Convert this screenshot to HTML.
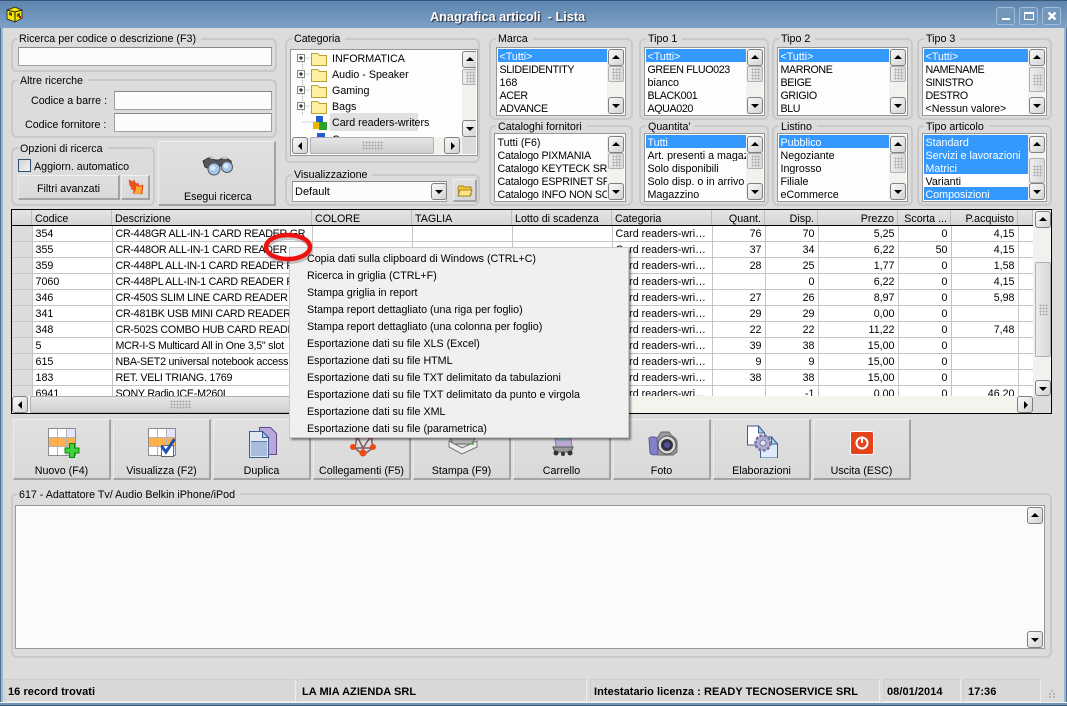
<!DOCTYPE html>
<html><head><meta charset="utf-8"><style>
html,body{margin:0;padding:0}
body{width:1067px;height:706px;overflow:hidden;position:relative;background:#dcdcdc;font:10.7px/13px "Liberation Sans",sans-serif;color:#000}
div,span,svg{position:absolute;box-sizing:border-box}
.g{border:2px solid #c9c9c9;border-radius:6px}
.l{background:#dcdcdc;padding:0 5px 0 2px;white-space:nowrap;height:13px}
.t{white-space:nowrap}
.in{background:#fcfcfc;border:1px solid #a0a0a0;border-top-color:#888}
.btn{background:linear-gradient(#e0e0e0,#d9d9d9);border:1px solid #f0f0f0;border-right:2px solid #a3a3a3;border-bottom:2px solid #a3a3a3;border-left-color:#ededed;text-align:center}
.lb{background:#fdfdfd;border:2px solid #fff;outline:1px solid #969696;outline-offset:-1px;overflow:hidden}
.i{position:absolute;left:0;right:17px;height:13px;line-height:17px;padding-left:1.5px;white-space:nowrap;overflow:hidden}
.u{letter-spacing:-.38px}
.s{background:#3399ff;color:#fff}
.tr{background:#f1f1ee;right:0;top:0;bottom:0;width:17px}
.sb{background:linear-gradient(135deg,#fafafa,#d2d2d4);border:1px solid #808080;border-radius:3px;width:16px;height:17px;left:0}
.up:after,.dn:after,.lf:after,.rt:after{content:"";position:absolute;width:0;height:0}
.up:after{left:3px;top:5px;border:4px solid transparent;border-top:0;border-bottom:4px solid #000}
.dn:after{left:3px;top:6px;border:4px solid transparent;border-bottom:0;border-top:4px solid #000}
.lf:after{left:5px;top:4px;border:4px solid transparent;border-left:0;border-right:4px solid #000}
.rt:after{left:6px;top:4px;border:4px solid transparent;border-right:0;border-left:4px solid #000}
.th{background:linear-gradient(90deg,#ececee,#d8d8da);border:1px solid #b0b0b2;border-radius:2px}
.th:after{content:"";position:absolute;left:50%;top:50%;width:9px;height:12px;margin:-6px 0 0 -4.5px;background-image:radial-gradient(#a8a8a8 .8px,transparent 1px);background-size:3px 3px}
.h:after{width:21px;height:9px;margin:-4.5px 0 0 -10.5px}
.hd{top:0;height:15px;background:linear-gradient(#e4e4e4,#d6d6d6);border-right:1px solid #bdbdbd;padding:3px 3px 0;white-space:nowrap;overflow:hidden}
.r{text-align:right}
table{position:absolute;left:0;top:0;border-collapse:collapse;table-layout:fixed;width:1021px;background:#fff}
td{height:14px;padding:1px 3px 0;border-right:1px solid #c4c4c4;border-bottom:1px solid #c4c4c4;white-space:nowrap;overflow:hidden;line-height:14px;vertical-align:middle}
td.n{text-align:right}
td.f{background:#dcdcdc;padding:0}
td.d{letter-spacing:-.25px}
.m{left:17px;white-space:nowrap;height:17px;line-height:17px;top:0}
.bl{left:0;right:0;top:45px;text-align:center;line-height:13px}
.st{top:679px;height:23px;background:#d8d8d8;border:1px solid #cfcfcf;border-right-color:#ececec;border-bottom-color:#ececec;font-size:11px;font-weight:bold;line-height:25px;padding-left:3px;white-space:nowrap;letter-spacing:.05px}
</style></head><body>

<!-- window frame -->
<div style="left:0;top:0;width:1067px;height:28px;background:linear-gradient(#5d85ae,#7da1c6);border-top:1px solid #33577a"></div>
<div style="left:0;top:28px;width:3px;height:678px;background:#9db7d2;border-left:1px solid #4a6d90"></div>
<div style="right:0;top:28px;width:3px;height:678px;background:#9db7d2;border-right:1px solid #4a6d90"></div>
<div style="left:0;top:702px;width:1067px;height:4px;background:#6f94ba;border-top:1px solid #f2f2f2;border-bottom:1px solid #3d5d7d"></div>
<svg style="left:6px;top:6px" width="17" height="17" viewBox="0 0 17 17"><path d="M1 4l8-3 7 3v8l-7 4-8-3z" fill="#f5e400" stroke="#333"/><path d="M9 6v10M1 4l8 2 7-2" stroke="#222" fill="none"/><path d="M3 6l3 1v3l-3-1zM11 8l3-1v3l-3 1z" fill="#443"/><rect x="13" y="10" width="2" height="2" fill="#c00"/></svg>
<div class="t" style="left:430px;top:11px;color:#fff;font-weight:bold;font-size:12.7px;text-shadow:1px 1px 1px #223;white-space:pre">Anagrafica articoli  - Lista</div>
<div style="left:996px;top:7px;width:19px;height:18px;border:1px solid #a5bdd6;border-radius:3px;background:#7297bd"><div style="left:5px;top:10px;width:8px;height:2px;background:#fff"></div></div>
<div style="left:1019px;top:7px;width:19px;height:18px;border:1px solid #a5bdd6;border-radius:3px;background:#7297bd"><div style="left:4px;top:4px;width:10px;height:8px;border:1px solid #fff;border-top-width:2px"></div></div>
<div style="left:1042px;top:7px;width:19px;height:18px;border:1px solid #a5bdd6;border-radius:3px;background:#7297bd"><svg style="left:4px;top:3px" width="10" height="10"><path d="M1.500 1.500l7 7M8.500 1.500l-7 7" stroke="#fff" stroke-width="2.400"/></svg></div>

<!-- Ricerca -->
<div class="g" style="left:11px;top:38px;width:266px;height:34px"></div>
<div class="l" style="left:17px;top:32px;line-height:15px">Ricerca per codice o descrizione (F3)</div>
<div class="in" style="left:18px;top:47px;width:254px;height:19px"></div>
<!-- Altre -->
<div class="g" style="left:11px;top:79px;width:266px;height:59px"></div>
<div class="l" style="left:18px;top:75px">Altre ricerche</div>
<div class="t" style="left:31px;top:95px">Codice a barre :</div>
<div class="in" style="left:114px;top:91px;width:158px;height:19px"></div>
<div class="t" style="left:25px;top:119px">Codice fornitore :</div>
<div class="in" style="left:114px;top:113px;width:158px;height:19px"></div>
<!-- Opzioni -->
<div class="g" style="left:11px;top:147px;width:144px;height:59px"></div>
<div class="l" style="left:18px;top:143px">Opzioni di ricerca</div>
<div style="left:18px;top:159px;width:13px;height:13px;border:1px solid #2f4f70;background:linear-gradient(135deg,#d4d4d4,#f2f2f2)"></div>
<div class="t" style="left:34px;top:161px">Aggiorn. automatico</div>
<div class="btn" style="left:18px;top:175px;width:102px;height:25px;line-height:27px">Filtri avanzati</div>
<div class="btn" style="left:121px;top:175px;width:29px;height:25px"><svg style="left:6px;top:3px" width="17" height="17" viewBox="0 0 17 17"><path d="M1 1l4 2 1-2 2 4 2-1 1 3 4-1-1 9-9-1 1-3-3-1 1-2-2-1z" fill="#f0501a" stroke="#e8400f" stroke-width=".6"/><path d="M8 7l3 1 3-1-1 8-7-1 2-3z" fill="#ffaa30"/></svg></div>
<!-- Esegui -->
<div class="btn" style="left:158px;top:141px;width:118px;height:65px">
<svg style="left:41px;top:12px" width="34" height="22" viewBox="0 0 34 22"><path d="M3 7l7-4 5 3h4l6-3 6 4 1 6-8 1-5-3h-3l-4 5-7-3z" fill="#55565c" stroke="#333"/><path d="M8 3l4-1 3 3H12zM20 3l5-1 3 3h-5z" fill="#c8c8cc"/><circle cx="14" cy="15" r="6" fill="#a5c8ee" stroke="#555"/><circle cx="27" cy="13" r="5.500" fill="#a5c8ee" stroke="#555"/><circle cx="13" cy="14" r="2.500" fill="#dcebfa"/><circle cx="26" cy="12" r="2.500" fill="#dcebfa"/></svg>
<div class="t" style="left:25px;top:49px">Esegui ricerca</div></div>

<!-- Categoria -->
<div class="g" style="left:285px;top:38px;width:195px;height:125px"></div>
<div class="l" style="left:292px;top:33px">Categoria</div>
<div class="lb" style="left:290px;top:49px;width:188px;height:107px">
 <svg style="left:0;top:0" width="60" height="90"><path d="M10.500 3v62M10.500 7h8M10.500 23h8M10.500 39h8M10.500 55h8M10.500 71h16" stroke="#aaa" stroke-dasharray="1 1" fill="none"/>
 <g fill="#fff" stroke="#888"><rect x="5.500" y="3.500" width="7" height="7"/><rect x="5.500" y="19.500" width="7" height="7"/><rect x="5.500" y="35.500" width="7" height="7"/><rect x="5.500" y="51.500" width="7" height="7"/></g>
 <path d="M7 7h4M9 5v4M7 23h4M9 21v4M7 39h4M9 37v4M7 55h4M9 53v4" stroke="#000"/>
 <g fill="#fdf0a0" stroke="#b9a030"><path d="M19.500 2.500h6l2 2h7v10h-15z"/><path d="M19.500 18.500h6l2 2h7v10h-15z"/><path d="M19.500 34.500h6l2 2h7v10h-15z"/><path d="M19.500 50.500h6l2 2h7v10h-15z"/></g>
 <rect x="24" y="65" width="7" height="7" fill="#1e5fd0"/><rect x="21" y="71" width="7" height="7" fill="#e8b800"/><rect x="27" y="71" width="8" height="8" fill="#2da52d"/><rect x="25" y="82" width="8" height="8" fill="#1e5fd0"/></svg>
 <div class="t" style="left:40px;top:2px">INFORMATICA</div>
 <div class="t" style="left:40px;top:18px">Audio - Speaker</div>
 <div class="t" style="left:40px;top:34px">Gaming</div>
 <div class="t" style="left:40px;top:50px">Bags</div>
 <div class="t" style="left:38px;top:62px;width:88px;height:18px;background:#e0e0e0;padding:4px 2px 0">Card readers-writers</div>
 <div class="t" style="left:40px;top:83px">Cases</div>
 <div class="tr" style="left:170px;width:16px;height:86px;top:0"><div class="sb up" style="top:0;height:17px"></div><div class="th" style="top:18px;left:0;width:16px;height:16px"></div><div class="sb dn" style="top:69px;height:17px"></div></div>
 <div style="left:0;top:86px;width:170px;height:19px;background:#f1f1ee"><div class="sb lf" style="left:0;top:0;height:17px"></div><div class="th h" style="left:18px;top:0;width:124px;height:17px;background:linear-gradient(#e6e6e8,#cfcfd2)"></div><div class="sb rt" style="left:152px;top:0;height:17px"></div></div>
 <div style="left:170px;top:86px;width:16px;height:19px;background:#dcdcdc"></div>
</div>
<!-- Visualizzazione -->
<div class="g" style="left:285px;top:174px;width:195px;height:32px"></div>
<div class="l" style="left:292px;top:169px">Visualizzazione</div>
<div class="in" style="left:292px;top:181px;width:155px;height:21px;padding:4px 2px;font-size:11px">Default<div class="sb dn" style="left:138px;top:1px;height:17px"></div></div>
<div class="btn" style="left:453px;top:179px;width:24px;height:23px"><svg style="left:3px;top:3px" width="16" height="15" viewBox="0 0 16 15"><path d="M1 5l1-2h4l1 1h7v8l-11 1H2z" fill="#f3c93b" stroke="#a8801a"/><path d="M3 7h12l-2 6H1z" fill="#fde48a" stroke="#a8801a"/></svg></div>

<!-- Marca -->
<div class="g" style="left:489px;top:38px;width:144px;height:82px"></div><div class="l" style="left:496px;top:33px">Marca</div>
<div class="lb" style="left:496px;top:47px;width:130px;height:69px"><div class="tr"></div>
<div class="i s" style="top:0">&lt;Tutti&gt;</div><div class="i u" style="top:13px">SLIDEIDENTITY</div><div class="i" style="top:26px">168</div><div class="i u" style="top:39px">ACER</div><div class="i u" style="top:52px">ADVANCE</div>
<div class="sb up" style="left:110px;top:0"></div><div class="th" style="left:110px;top:17px;width:16px;height:16px"></div><div class="sb dn" style="left:110px;top:48px"></div></div>
<!-- Tipo 1 -->
<div class="g" style="left:639px;top:38px;width:130px;height:82px"></div><div class="l" style="left:646px;top:33px">Tipo 1</div>
<div class="lb" style="left:644px;top:47px;width:121px;height:69px"><div class="tr"></div>
<div class="i s" style="top:0">&lt;Tutti&gt;</div><div class="i u" style="top:13px">GREEN FLUO023</div><div class="i" style="top:26px">bianco</div><div class="i u" style="top:39px">BLACK001</div><div class="i u" style="top:52px">AQUA020</div>
<div class="sb up" style="left:101px;top:0"></div><div class="th" style="left:101px;top:17px;width:16px;height:16px"></div><div class="sb dn" style="left:101px;top:48px"></div></div>
<!-- Tipo 2 -->
<div class="g" style="left:772px;top:38px;width:141px;height:82px"></div><div class="l" style="left:779px;top:33px">Tipo 2</div>
<div class="lb" style="left:777px;top:47px;width:131px;height:69px"><div class="tr"></div>
<div class="i s" style="top:0">&lt;Tutti&gt;</div><div class="i u" style="top:13px">MARRONE</div><div class="i u" style="top:26px">BEIGE</div><div class="i u" style="top:39px">GRIGIO</div><div class="i u" style="top:52px">BLU</div>
<div class="sb up" style="left:111px;top:0"></div><div class="th" style="left:111px;top:17px;width:16px;height:16px"></div><div class="sb dn" style="left:111px;top:48px"></div></div>
<!-- Tipo 3 -->
<div class="g" style="left:917px;top:38px;width:135px;height:82px"></div><div class="l" style="left:924px;top:33px">Tipo 3</div>
<div class="lb" style="left:922px;top:47px;width:125px;height:69px"><div class="tr"></div>
<div class="i s" style="top:0">&lt;Tutti&gt;</div><div class="i u" style="top:13px">NAMENAME</div><div class="i u" style="top:26px">SINISTRO</div><div class="i u" style="top:39px">DESTRO</div><div class="i" style="top:52px">&lt;Nessun valore&gt;</div>
<div class="sb up" style="left:105px;top:0"></div><div class="th" style="left:105px;top:18px;width:16px;height:25px"></div><div class="sb dn" style="left:105px;top:48px"></div></div>

<!-- Cataloghi -->
<div class="g" style="left:489px;top:125px;width:144px;height:81px"></div><div class="l" style="left:496px;top:121px">Cataloghi fornitori</div>
<div class="lb" style="left:494px;top:133px;width:132px;height:69px"><div class="tr"></div>
<div class="i" style="top:0">Tutti (F6)</div><div class="i u" style="top:13px;letter-spacing:-.2px">Catalogo PIXMANIA</div><div class="i u" style="top:26px;letter-spacing:-.2px">Catalogo KEYTECK SRL</div><div class="i u" style="top:39px;letter-spacing:-.2px">Catalogo ESPRINET SPA</div><div class="i u" style="top:52px;letter-spacing:-.2px">Catalogo INFO NON SOLO</div>
<div class="sb up" style="left:112px;top:1px"></div><div class="th" style="left:112px;top:18px;width:16px;height:16px"></div><div class="sb dn" style="left:112px;top:48px"></div></div>
<!-- Quantita -->
<div class="g" style="left:639px;top:125px;width:130px;height:81px"></div><div class="l" style="left:646px;top:121px">Quantita'</div>
<div class="lb" style="left:644px;top:133px;width:121px;height:69px"><div class="tr"></div>
<div class="i s" style="top:0">Tutti</div><div class="i" style="top:13px">Art. presenti a magazzino</div><div class="i" style="top:26px">Solo disponibili</div><div class="i" style="top:39px">Solo disp. o in arrivo</div><div class="i" style="top:52px">Magazzino</div>
<div class="sb up" style="left:101px;top:1px"></div><div class="th" style="left:101px;top:18px;width:16px;height:16px"></div><div class="sb dn" style="left:101px;top:48px"></div></div>
<!-- Listino -->
<div class="g" style="left:772px;top:125px;width:141px;height:81px"></div><div class="l" style="left:779px;top:121px">Listino</div>
<div class="lb" style="left:777px;top:133px;width:131px;height:69px"><div class="tr"></div>
<div class="i s" style="top:0">Pubblico</div><div class="i" style="top:13px">Negoziante</div><div class="i" style="top:26px">Ingrosso</div><div class="i" style="top:39px">Filiale</div><div class="i" style="top:52px">eCommerce</div>
<div class="sb up" style="left:111px;top:1px"></div><div class="th" style="left:111px;top:18px;width:16px;height:20px"></div><div class="sb dn" style="left:111px;top:48px"></div></div>
<!-- Tipo articolo -->
<div class="g" style="left:917px;top:125px;width:135px;height:81px"></div><div class="l" style="left:924px;top:121px">Tipo articolo</div>
<div class="lb" style="left:922px;top:133px;width:125px;height:69px"><div class="tr"></div>
<div class="i s" style="top:0">Standard</div><div class="i s" style="top:13px">Servizi e lavorazioni</div><div class="i s" style="top:26px">Matrici</div><div class="i" style="top:39px">Varianti</div><div class="i s" style="top:52px">Composizioni</div>
<div class="sb up" style="left:105px;top:1px"></div><div class="th" style="left:105px;top:23px;width:16px;height:25px"></div><div class="sb dn" style="left:105px;top:48px"></div></div>

<!-- Grid -->
<div style="left:11px;top:209px;width:1041px;height:205px;background:#dcdcdc;border:1px solid #000;overflow:hidden">
 <div class="hd" style="left:0;width:20px"></div>
 <div class="hd" style="left:20px;width:80px">Codice</div>
 <div class="hd" style="left:100px;width:200px">Descrizione</div>
 <div class="hd" style="left:300px;width:100px">COLORE</div>
 <div class="hd" style="left:400px;width:100px">TAGLIA</div>
 <div class="hd" style="left:500px;width:100px">Lotto di scadenza</div>
 <div class="hd" style="left:600px;width:100px">Categoria</div>
 <div class="hd r" style="left:700px;width:53px">Quant.</div>
 <div class="hd r" style="left:753px;width:53px">Disp.</div>
 <div class="hd r" style="left:806px;width:80px">Prezzo</div>
 <div class="hd r" style="left:886px;width:53px">Scorta ...</div>
 <div class="hd r" style="left:939px;width:67px">P.acquisto</div>
 <div class="hd" style="left:1006px;width:15px"></div>
 <div style="left:0;top:15px;width:1021px;height:1px;background:#000"></div>
 <div style="left:0;top:16px;width:1021px;height:170px;overflow:hidden">
 <table><colgroup><col style="width:20px"><col style="width:80px"><col style="width:200px"><col style="width:100px"><col style="width:100px"><col style="width:100px"><col style="width:100px"><col style="width:53px"><col style="width:53px"><col style="width:80px"><col style="width:53px"><col style="width:67px"><col style="width:15px"></colgroup>
 <tr><td class="f"></td><td>354</td><td class="d">CR-448GR ALL-IN-1 CARD READER GR</td><td></td><td></td><td></td><td>Card readers-wri…</td><td class="n">76</td><td class="n">70</td><td class="n">5,25</td><td class="n">0</td><td class="n">4,15</td><td></td></tr>
 <tr><td class="f"></td><td>355</td><td class="d">CR-448OR ALL-IN-1 CARD READER</td><td></td><td></td><td></td><td>Card readers-wri…</td><td class="n">37</td><td class="n">34</td><td class="n">6,22</td><td class="n">50</td><td class="n">4,15</td><td></td></tr>
 <tr><td class="f"></td><td>359</td><td class="d">CR-448PL ALL-IN-1 CARD READER PL</td><td></td><td></td><td></td><td>Card readers-wri…</td><td class="n">28</td><td class="n">25</td><td class="n">1,77</td><td class="n">0</td><td class="n">1,58</td><td></td></tr>
 <tr><td class="f"></td><td>7060</td><td class="d">CR-448PL ALL-IN-1 CARD READER PL</td><td></td><td></td><td></td><td>Card readers-wri…</td><td class="n"></td><td class="n">0</td><td class="n">6,22</td><td class="n">0</td><td class="n">4,15</td><td></td></tr>
 <tr><td class="f"></td><td>346</td><td class="d">CR-450S SLIM LINE CARD READER SD</td><td></td><td></td><td></td><td>Card readers-wri…</td><td class="n">27</td><td class="n">26</td><td class="n">8,97</td><td class="n">0</td><td class="n">5,98</td><td></td></tr>
 <tr><td class="f"></td><td>341</td><td class="d">CR-481BK USB MINI CARD READER BK</td><td></td><td></td><td></td><td>Card readers-wri…</td><td class="n">29</td><td class="n">29</td><td class="n">0,00</td><td class="n">0</td><td class="n"></td><td></td></tr>
 <tr><td class="f"></td><td>348</td><td class="d">CR-502S COMBO HUB CARD READER</td><td></td><td></td><td></td><td>Card readers-wri…</td><td class="n">22</td><td class="n">22</td><td class="n">11,22</td><td class="n">0</td><td class="n">7,48</td><td></td></tr>
 <tr><td class="f"></td><td>5</td><td class="d">MCR-I-S Multicard All in One 3,5" slot</td><td></td><td></td><td></td><td>Card readers-wri…</td><td class="n">39</td><td class="n">38</td><td class="n">15,00</td><td class="n">0</td><td class="n"></td><td></td></tr>
 <tr><td class="f"></td><td>615</td><td class="d">NBA-SET2 universal notebook access</td><td></td><td></td><td></td><td>Card readers-wri…</td><td class="n">9</td><td class="n">9</td><td class="n">15,00</td><td class="n">0</td><td class="n"></td><td></td></tr>
 <tr><td class="f"></td><td>183</td><td class="d">RET. VELI TRIANG. 1769</td><td></td><td></td><td></td><td>Card readers-wri…</td><td class="n">38</td><td class="n">38</td><td class="n">15,00</td><td class="n">0</td><td class="n"></td><td></td></tr>
 <tr><td class="f"></td><td>6941</td><td class="d">SONY Radio ICE-M260L</td><td></td><td></td><td></td><td>Card readers-wri…</td><td class="n"></td><td class="n">-1</td><td class="n">0,00</td><td class="n">0</td><td class="n">46,20</td><td></td></tr>
 </table></div>
 <div style="left:1021px;top:0;width:18px;height:186px;background:#f1f1ee"><div class="sb up" style="left:2px;top:1px"></div><div class="th" style="left:2px;top:52px;width:16px;height:95px"></div><div class="sb dn" style="left:2px;top:170px;height:16px"></div></div>
 <div style="left:0;top:186px;width:1021px;height:17px;background:#f4f3ee"><div class="sb lf" style="left:0;top:0"></div><div class="th h" style="left:18px;top:0;width:300px;height:17px;background:linear-gradient(#e6e6e8,#cfcfd2)"></div><div class="sb rt" style="left:1005px;top:0"></div></div>
</div>

<!-- Buttons -->
<div class="btn" style="left:13px;top:419px;width:98px;height:61px"><svg style="left:34px;top:8px" width="32" height="30" viewBox="0 0 32 30"><rect x=".5" y=".5" width="27" height="27" fill="#fff" stroke="#8c8c8c"/><rect x="19" y="1" width="8" height="26" fill="#e4e4fb"/><rect x="1" y="9" width="26" height="9" fill="#ffb04d"/><path d="M9.500 1v26M18.500 1v26M1 9.500h26M1 18.500h26" stroke="#b5b5b5"/><path d="M21.500 15.500h5v4.500h4.500v5h-4.500v4.500h-5v-4.500h-4.500v-5h4.500z" fill="#3fd23f" stroke="#0a8a0a"/></svg><div class="bl">Nuovo (F4)</div></div>
<div class="btn" style="left:113px;top:419px;width:98px;height:61px"><svg style="left:34px;top:8px" width="32" height="30" viewBox="0 0 32 30"><rect x=".5" y=".5" width="27" height="27" fill="#fff" stroke="#8c8c8c"/><rect x="19" y="1" width="8" height="26" fill="#e4e4fb"/><rect x="1" y="9" width="26" height="9" fill="#ffb04d"/><path d="M9.500 1v26M18.500 1v26M1 9.500h26M1 18.500h26" stroke="#b5b5b5"/><rect x="13.500" y="17.500" width="12" height="11" fill="#fff" stroke="#666"/><path d="M13.500 18l4.500 6 8.500-13" fill="none" stroke="#1c4fb0" stroke-width="3"/></svg><div class="bl">Visualizza (F2)</div></div>
<div class="btn" style="left:213px;top:419px;width:98px;height:61px"><svg style="left:34px;top:6px" width="30" height="32" viewBox="0 0 30 32"><path d="M11.500 1.500h11l6 6v21h-17z" fill="#b9a8dc" stroke="#5f4d8e"/><path d="M1.500 5.500h13l6 6v20h-19z" fill="#dfe7f3" stroke="#3f5c90"/><rect x="3" y="16" width="16" height="14" fill="#a9bcdc"/><path d="M3 15.500h16" stroke="#5f7aa8"/><path d="M14.500 5.500v6h6z" fill="#a5d8f0" stroke="#3f5c90"/></svg><div class="bl">Duplica</div></div>
<div class="btn" style="left:313px;top:419px;width:98px;height:61px"><svg style="left:35px;top:6px" width="28" height="32" viewBox="0 0 28 32"><path d="M6 22l8 7 10-7-2-12H8zM8 10l6 12 8-12M14 22v7M6 22h8h10" fill="none" stroke="#7a6060" stroke-width="1.500"/><g fill="#f04a10"><circle cx="8" cy="10" r="3"/><circle cx="22" cy="10" r="3"/><circle cx="15" cy="4" r="3"/><circle cx="4" cy="21" r="3"/><circle cx="24" cy="21" r="3"/><circle cx="14" cy="27" r="3.500"/></g></svg><div class="bl">Collegamenti (F5)</div></div>
<div class="btn" style="left:413px;top:419px;width:98px;height:61px"><svg style="left:33px;top:7px" width="32" height="30" viewBox="0 0 32 30"><path d="M8 2h14l6 10-4 5H6l-3-6z" fill="#b8b8b8" stroke="#666"/><path d="M2 14l13 7 15-7v6l-15 7-13-7z" fill="#efefef" stroke="#777"/><rect x="24" y="16" width="3" height="2" fill="#44d040"/></svg><div class="bl">Stampa (F9)</div></div>
<div class="btn" style="left:513px;top:419px;width:98px;height:61px"><svg style="left:33px;top:5px" width="32" height="32" viewBox="0 0 32 32"><path d="M7 2h16l2 20H9z" fill="#b8a9d6" stroke="#888"/><path d="M13 4h6v12h-6z" fill="#8fc0c0"/><path d="M6 22h20l-2 5H8z" fill="#9a9a9a" stroke="#555"/><circle cx="9" cy="28" r="2.500" fill="#333"/><circle cx="23" cy="28" r="2.500" fill="#333"/><circle cx="16" cy="29" r="2" fill="#333"/></svg><div class="bl">Carrello</div></div>
<div class="btn" style="left:613px;top:419px;width:98px;height:61px"><svg style="left:33px;top:11px" width="32" height="26" viewBox="0 0 32 26"><path d="M2 7h8l3-4 1-2h8l2 3 4 3 2 3v11l-4 3H10z" fill="#9c9ca0" stroke="#666"/><path d="M2 7c3-2 8-1 8 1l1 14c-2 3-7 2-8 0z" fill="#8380c8" stroke="#5c5a9a"/><circle cx="20" cy="14" r="9" fill="#d8d8d8" stroke="#555"/><circle cx="20" cy="14" r="6" fill="#33333d"/><circle cx="20" cy="14" r="3" fill="#5050a8"/></svg><div class="bl">Foto</div></div>
<div class="btn" style="left:713px;top:419px;width:98px;height:61px"><svg style="left:33px;top:5px" width="32" height="33" viewBox="0 0 32 33"><path d="M.5 1h11l6 7v12h-17z" fill="#fff" stroke="#3f5c90"/><path d="M13.500 12h11l6 7v14h-17z" fill="#dceafa" stroke="#3f5c90"/><path d="M11.500 1v7h6z" fill="#a5d0f0" stroke="#3f5c90"/><path d="M24.500 12v7h6z" fill="#a5d0f0" stroke="#3f5c90"/><circle cx="16" cy="18" r="7.500" fill="#b0aed0" stroke="#7573a0" stroke-width="2.500" stroke-dasharray="3 1.500"/><circle cx="16" cy="18" r="3" fill="#e4e3f0" stroke="#7573a0"/></svg><div class="bl">Elaborazioni</div></div>
<div class="btn" style="left:813px;top:419px;width:98px;height:61px"><svg style="left:36px;top:11px" width="24" height="24" viewBox="0 0 24 24"><rect x=".5" y=".5" width="23" height="23" rx="2" fill="#e5431c" stroke="#fff"/><circle cx="12" cy="12" r="5.500" fill="none" stroke="#fff" stroke-width="2"/><rect x="11" y="6" width="2" height="6" fill="#fff"/></svg><div class="bl">Uscita (ESC)</div></div>

<!-- Memo -->
<div class="g" style="left:11px;top:493px;width:1041px;height:165px"></div>
<div class="l" style="left:17px;top:489px;padding-left:2px">617 - Adattatore Tv/ Audio Belkin iPhone/iPod</div>
<div style="left:15px;top:505px;width:1030px;height:144px;background:#fbfbfb;border:1px solid #999">
 <div class="sb up" style="left:1011px;top:1px"></div><div class="sb dn" style="left:1011px;top:125px"></div>
</div>

<!-- Status -->
<div class="st" style="left:4px;width:292px">16 record trovati</div>
<div class="st" style="left:297px;width:290px;padding-left:4px">LA MIA AZIENDA SRL</div>
<div class="st" style="left:590px;width:290px;padding-left:3px">Intestatario licenza : READY TECNOSERVICE SRL</div>
<div class="st" style="left:883px;width:78px;padding-left:3px">08/01/2014</div>
<div class="st" style="left:963px;width:78px;padding-left:4px">17:36</div>
<svg style="left:1046px;top:689px" width="10" height="12"><path d="M5 2h2M3 5h2M7 5h2M3 8h2M7 8h2" stroke="#aaa" stroke-width="1.500"/></svg>

<!-- context menu -->
<div style="left:289px;top:247px;width:340px;height:191px;background:#f0f0f0;border:1px solid #c8c8c8;box-shadow:2px 2px 2px rgba(0,0,0,.45)">
 <div class="m" style="top:3px">Copia dati sulla clipboard di Windows (CTRL+C)</div>
 <div class="m" style="top:20px">Ricerca in griglia (CTRL+F)</div>
 <div class="m" style="top:37px">Stampa griglia in report</div>
 <div class="m" style="top:54px">Stampa report dettagliato (una riga per foglio)</div>
 <div class="m" style="top:71px">Stampa report dettagliato (una colonna per foglio)</div>
 <div class="m" style="top:88px">Esportazione dati su file XLS (Excel)</div>
 <div class="m" style="top:105px">Esportazione dati su file HTML</div>
 <div class="m" style="top:122px">Esportazione dati su file TXT delimitato da tabulazioni</div>
 <div class="m" style="top:139px">Esportazione dati su file TXT delimitato da punto e virgola</div>
 <div class="m" style="top:156px">Esportazione dati su file XML</div>
 <div class="m" style="top:173px">Esportazione dati su file (parametrica)</div>
</div>
<!-- red circle -->
<svg style="left:258px;top:228px" width="62" height="38" viewBox="0 0 62 38"><ellipse cx="31" cy="22" rx="22" ry="12" fill="none" stroke="#666" stroke-width="4" opacity=".35"/><ellipse cx="30" cy="19" rx="22" ry="12" fill="none" stroke="#ee1111" stroke-width="4.500"/></svg>
</body></html>
